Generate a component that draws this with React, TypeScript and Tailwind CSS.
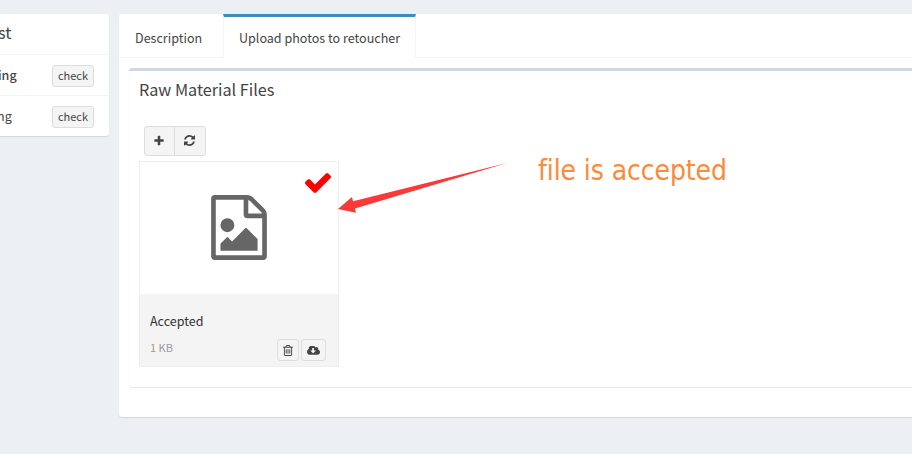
import type { ReactNode } from "react";

type IconProps = { className?: string };

const PlusIcon = ({ className }: IconProps) => (
  <svg viewBox="0 0 1792 1792" fill="currentColor" className={className}>
    <path d="M1600 736v192q0 40-28 68t-68 28h-416v416q0 40-28 68t-68 28h-192q-40 0-68-28t-28-68v-416h-416q-40 0-68-28t-28-68v-192q0-40 28-68t68-28h416v-416q0-40 28-68t68-28h192q40 0 68 28t28 68v416h416q40 0 68 28t28 68z" />
  </svg>
);

const RefreshIcon = ({ className }: IconProps) => (
  <svg viewBox="0 0 1536 1536" fill="currentColor" className={className}>
    <path d="M1511 928q0 5-1 7-64 268-268 434.500t-478 166.500q-146 0-282.500-55t-243.500-157l-129 129q-19 19-45 19t-45-19-19-45v-448q0-26 19-45t45-19h448q26 0 45 19t19 45-19 45l-137 137q71 66 161 102t187 36q134 0 250-65t186-179q11-17 53-117 8-23 30-23h192q13 0 22.500 9.500t9.500 22.500zm25-800v448q0 26-19 45t-45 19h-448q-26 0-45-19t-19-45 19-45l138-138q-148-137-349-137-134 0-250 65t-186 179q-11 17-53 117-8 23-30 23h-199q-13 0-22.500-9.500t-9.500-22.500v-7q65-268 270-434.500t480-166.500q146 0 284 55.500t245 156.500l130-129q19-19 45-19t45 19 19 45z" />
  </svg>
);

const CheckIcon = ({ className }: IconProps) => (
  <svg viewBox="121 278 1550 1188" fill="currentColor" className={className}>
    <path d="M1671 510q0 40-28 68l-724 724-136 136q-28 28-68 28t-68-28l-136-136-362-362q-28-28-28-68t28-68l136-136q28-28 68-28t68 28l294 295 656-657q28-28 68-28t68 28l136 136q28 28 28 68z" />
  </svg>
);

const TrashIcon = ({ className }: IconProps) => (
  <svg viewBox="192 128 1408 1536" fill="currentColor" className={className}>
    <path d="M704 736v576q0 14-9 23t-23 9h-64q-14 0-23-9t-9-23v-576q0-14 9-23t23-9h64q14 0 23 9t9 23zm256 0v576q0 14-9 23t-23 9h-64q-14 0-23-9t-9-23v-576q0-14 9-23t23-9h64q14 0 23 9t9 23zm256 0v576q0 14-9 23t-23 9h-64q-14 0-23-9t-9-23v-576q0-14 9-23t23-9h64q14 0 23 9t9 23zm128 724v-948h-896v948q0 22 7 40.500t14.500 27 10.500 8.500h832q3 0 10.500-8.500t14.500-27 7-40.500zm-672-1076h448l-48-117q-7-9-17-11h-317q-10 2-17 11zm928 32v64q0 14-9 23t-23 9h-96v948q0 83-47 143.500t-113 60.500h-832q-66 0-113-58.500t-47-141.500v-952h-96q-14 0-23-9t-9-23v-64q0-14 9-23t23-9h309l70-167q15-37 54-63t79-26h320q40 0 79 26t54 63l70 167h309q14 0 23 9t9 23z" />
  </svg>
);

const CloudDownloadIcon = ({ className }: IconProps) => (
  <svg viewBox="-64 256 1920 1280" fill="currentColor" className={className}>
    <path d="M1216 928q0-14-9-23t-23-9h-224v-352q0-13-9.500-22.500t-22.500-9.500h-192q-13 0-22.500 9.500t-9.500 22.500v352h-224q-13 0-22.500 9.500t-9.500 22.500q0 14 9 23l352 352q9 9 23 9t23-9l351-351q10-12 10-24zm640 224q0 159-112.500 271.500t-271.500 112.500h-1088q-185 0-316.500-131.500t-131.500-316.500q0-130 70-240t188-165q-2-30-2-43 0-212 150-362t362-150q156 0 285.500 87t188.500 231q71-62 166-62 106 0 181 75t75 181q0 76-41 138 130 31 213.500 135.500t83.500 238.500z" />
  </svg>
);

const FileImageIcon = ({ className }: IconProps) => (
  <svg viewBox="128 0 1536 1792" fill="currentColor" className={className}>
    <path d="M1596 380q28 28 48 76t20 88v1152q0 40-28 68t-68 28h-1344q-40 0-68-28t-28-68v-1600q0-40 28-68t68-28h896q40 0 88 20t76 48zm-444-244v376h376q-10-29-22-41l-313-313q-12-12-41-22zm384 1528v-1024h-416q-40 0-68-28t-28-68v-416h-768v1536h1280zm-128-448v320h-1024v-192l192-192 128 128 384-384zm-832-192q-80 0-136-56t-56-136 56-136 136-56 136 56 56 136-56 136-136 56z" />
  </svg>
);

const SmallButton = ({ children, className }: { children: ReactNode; className: string }) => (
  <button
    className={`flex h-[22px] items-center justify-center rounded-[3px] border border-[#ddd] bg-[#f4f4f4] text-[#444] ${className}`}
  >
    {children}
  </button>
);

function Sidebar() {
  return (
    <aside className="h-[122px] w-[109px] shrink-0 overflow-hidden rounded-r-[3px] bg-white shadow-[0_1px_1px_rgba(0,0,0,0.1)]">
      <h3 className="flex h-[41px] items-center border-b border-[#f4f4f4] pb-[3px] text-[16.2px] leading-none">
        <span className="-ml-[2px]">st</span>
      </h3>
      <div className="flex h-[41px] items-center justify-between border-b border-[#f4f4f4] pt-px pr-[15px] text-[12.5px]">
        <span className="-ml-[2px] font-medium">ing</span>
        <SmallButton className="w-[42px] text-[11px]">check</SmallButton>
      </div>
      <div className="flex h-[40px] items-center justify-between pt-px pr-[15px] text-[12.5px]">
        <span className="-ml-[3px]">ng</span>
        <SmallButton className="w-[42px] text-[11px]">check</SmallButton>
      </div>
    </aside>
  );
}

function FileCard() {
  return (
    <div className="relative h-[206px] w-[200px] border border-[#eee]">
      <div className="flex h-[132px] items-center justify-center bg-white pb-[2px] text-[#666]">
        <FileImageIcon className="h-[65px] w-[56px]" />
      </div>
      <CheckIcon className="absolute top-[11px] right-[7px] h-[20px] w-[26px] text-[#f00]" />
      <div className="h-[72px] bg-[#f4f4f4] px-[10px] pt-[18px]">
        <div className="text-[12.5px] leading-[18px] text-[#333]">Accepted</div>
        <div className="mt-[9px] flex items-start justify-between pr-[2px]">
          <span className="text-[11px] leading-[16px] text-[#999]">1 KB</span>
          <div className="flex gap-[2px]">
            <SmallButton className="w-[22px]">
              <TrashIcon className="h-[11px] w-[10px]" />
            </SmallButton>
            <SmallButton className="w-[25px]">
              <CloudDownloadIcon className="h-[9px] w-[13px]" />
            </SmallButton>
          </div>
        </div>
      </div>
    </div>
  );
}

export default function App() {
  return (
    <div className="relative flex h-[454px] w-[912px] gap-[10px] overflow-hidden bg-[#ecf0f5] pt-[14px] font-['Noto_Sans_CJK_SC',sans-serif] text-[#444]">
      <Sidebar />
      <main className="h-[403px] grow rounded-l-[3px] bg-white shadow-[0_1px_1px_rgba(0,0,0,0.1)]">
        <nav className="flex h-[44px] text-[12.55px] leading-[20px]">
          <div className="w-[104px] border-b border-[#f4f4f4] pt-[14px] pl-[16px]">Description</div>
          <div className="w-[193px] border-x border-t-[3px] border-x-[#f4f4f4] border-t-[#3c8dbc] pt-[11px] pl-[15px] whitespace-nowrap">
            Upload photos to retoucher
          </div>
          <div className="grow border-b border-[#f4f4f4]" />
        </nav>
        <section className="mt-[10px] ml-[10px] h-[319px] rounded-l-[3px] border-t-[3px] border-[#d2d6de] bg-white pl-[10px] shadow-[0_1px_1px_rgba(0,0,0,0.1)]">
          <h3 className="pt-[8px] text-[16.2px] leading-[20px]">Raw Material Files</h3>
          <div className="mt-[27px] ml-[5px] flex h-[30px] w-[62px] overflow-hidden rounded-[3px] border border-[#ddd] bg-[#f4f4f4]">
            <button className="flex w-[30px] items-center justify-center border-r border-[#ddd] pr-px">
              <PlusIcon className="h-[12px] w-[12px]" />
            </button>
            <button className="flex w-[30px] items-center justify-center pr-px pb-px">
              <RefreshIcon className="h-[11px] w-[11px]" />
            </button>
          </div>
          <div className="mt-[5px]">
            <FileCard />
          </div>
        </section>
      </main>
      <svg className="absolute top-[160px] left-[336px] h-[56px] w-[174px]" viewBox="336 160 174 56">
        <path d="M338 209 352 197l1 4.300L507 163 355 208.500l1 4.300Z" fill="#fc3838" />
      </svg>
      <div className="absolute top-[153px] left-[538px] font-['DejaVu_Sans_Condensed','DejaVu_Sans',sans-serif] text-[28px] leading-[36px] tracking-[-0.1px] whitespace-nowrap text-[#fc8a38] [font-variant-ligatures:none]">
        file is accepted
      </div>
    </div>
  );
}
